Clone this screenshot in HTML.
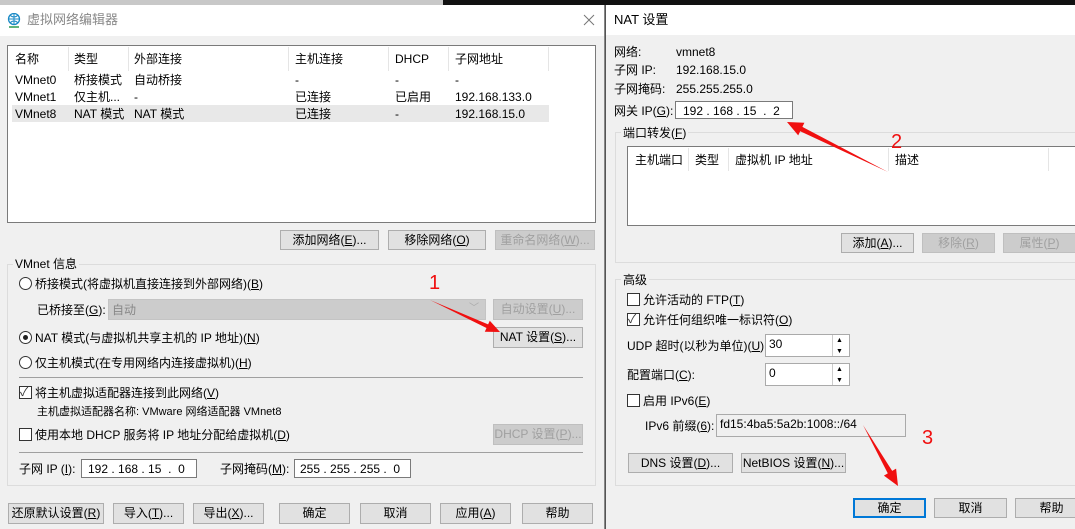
<!DOCTYPE html>
<html><head><meta charset="utf-8">
<style>
*{margin:0;padding:0;box-sizing:border-box}
body{width:1075px;height:529px;overflow:hidden;background:#f0f0f0;font-family:"Liberation Sans","Noto Sans CJK SC",sans-serif;font-size:12px;color:#000;position:relative}
.a{position:absolute;white-space:nowrap;line-height:14px}
.btn{position:absolute;background:#e1e1e1;border:1px solid #adadad;text-align:center;line-height:18px;white-space:nowrap}
.dis{color:#a0a0a0;background:#cccccc;border-color:#bfbfbf}
.box{position:absolute;background:#fff;border:1px solid #7a7a7a}
.grp{position:absolute;border:1px solid #dcdcdc}
.rad{position:absolute;width:13px;height:13px;border:1px solid #333;border-radius:50%;background:#fff}
.chk{position:absolute;width:13px;height:13px;border:1px solid #333;background:#fff}
.sep{position:absolute;height:1px;background:#a0a0a0}
.vs{position:absolute;width:1px;background:#e5e5e5}
.red{position:absolute;color:#f01010;font-size:20px;line-height:20px}
u{text-decoration:underline}
</style></head><body>
<div style="position:absolute;left:0;top:0;width:443px;height:5px;background:#c8c8c8"></div>
<div style="position:absolute;left:443px;top:0;width:632px;height:5px;background:#111"></div>
<div style="position:absolute;left:0;top:5px;width:604px;height:31px;background:#fff"></div>
<svg style="position:absolute;left:7px;top:13px" width="14" height="15" viewBox="0 0 14 15"><circle cx="7" cy="6" r="5.5" fill="none" stroke="#1a8ac6" stroke-width="1.3"/><path d="M1.5 6h11M7 .5v11M3.5 2.5c2 2 5 2 7 0M3.5 9.5c2-2 5-2 7 0" fill="none" stroke="#1a8ac6" stroke-width="1"/><path d="M2 14h10" stroke="#2a9a50" stroke-width="1.5"/></svg>
<div class="a" style="left:27px;top:13px;font-size:13px;color:#888">虚拟网络编辑器</div>
<svg style="position:absolute;left:583px;top:14px" width="12" height="12"><path d="M1 1L11 11M11 1L1 11" stroke="#777" stroke-width="1"/></svg>
<div style="position:absolute;left:604px;top:5px;width:1px;height:524px;background:#888"></div>
<div class="box" style="left:7px;top:45px;width:589px;height:178px"></div>
<div class="vs" style="left:68px;top:47px;height:24px"></div>
<div class="vs" style="left:128px;top:47px;height:24px"></div>
<div class="vs" style="left:288px;top:47px;height:24px"></div>
<div class="vs" style="left:388px;top:47px;height:24px"></div>
<div class="vs" style="left:448px;top:47px;height:24px"></div>
<div class="vs" style="left:548px;top:47px;height:24px"></div>
<div class="a" style="left:15px;top:52px">名称</div><div class="a" style="left:74px;top:52px">类型</div><div class="a" style="left:134px;top:52px">外部连接</div><div class="a" style="left:295px;top:52px">主机连接</div><div class="a" style="left:395px;top:52px">DHCP</div><div class="a" style="left:455px;top:52px">子网地址</div>
<div class="a" style="left:15px;top:73px">VMnet0</div><div class="a" style="left:74px;top:73px">桥接模式</div><div class="a" style="left:134px;top:73px">自动桥接</div><div class="a" style="left:295px;top:73px">-</div><div class="a" style="left:395px;top:73px">-</div><div class="a" style="left:455px;top:73px">-</div>
<div class="a" style="left:15px;top:90px">VMnet1</div><div class="a" style="left:74px;top:90px">仅主机...</div><div class="a" style="left:134px;top:90px">-</div><div class="a" style="left:295px;top:90px">已连接</div><div class="a" style="left:395px;top:90px">已启用</div><div class="a" style="left:455px;top:90px">192.168.133.0</div>
<div style="position:absolute;left:12px;top:105px;width:537px;height:17px;background:#e8e8e8"></div>
<div class="a" style="left:15px;top:107px">VMnet8</div><div class="a" style="left:74px;top:107px">NAT 模式</div><div class="a" style="left:134px;top:107px">NAT 模式</div><div class="a" style="left:295px;top:107px">已连接</div><div class="a" style="left:395px;top:107px">-</div><div class="a" style="left:455px;top:107px">192.168.15.0</div>
<div class="btn" style="left:280px;top:230px;width:99px;height:20px">添加网络(<u>E</u>)...</div>
<div class="btn" style="left:388px;top:230px;width:98px;height:20px">移除网络(<u>O</u>)</div>
<div class="btn dis" style="left:495px;top:230px;width:100px;height:20px">重命名网络(<u>W</u>)...</div>
<div class="grp" style="left:7px;top:264px;width:589px;height:222px"></div>
<div class="a" style="left:13px;top:257px;background:#f0f0f0;padding:0 2px">VMnet 信息</div>
<div class="rad" style="left:19px;top:277px"></div><div class="a" style="left:35px;top:277px">桥接模式(将虚拟机直接连接到外部网络)(<u>B</u>)</div>
<div class="a" style="left:37px;top:303px">已桥接至(<u>G</u>):</div>
<div style="position:absolute;left:108px;top:299px;width:378px;height:21px;background:#cccccc;border:1px solid #c4c4c4"></div>
<div class="a" style="left:112px;top:303px;color:#888">自动</div><div class="a" style="left:469px;top:302px;color:#aaa;font-size:10px">﹀</div>
<div class="btn dis" style="left:493px;top:299px;width:90px;height:21px">自动设置(<u>U</u>)...</div>
<div class="rad" style="left:19px;top:331px"></div><div style="position:absolute;left:23px;top:335px;width:5px;height:5px;border-radius:50%;background:#222"></div>
<div class="a" style="left:35px;top:331px">NAT 模式(与虚拟机共享主机的 IP 地址)(<u>N</u>)</div>
<div class="btn" style="left:493px;top:327px;width:90px;height:21px">NAT 设置(<u>S</u>)...</div>
<div class="rad" style="left:19px;top:356px"></div><div class="a" style="left:35px;top:356px">仅主机模式(在专用网络内连接虚拟机)(<u>H</u>)</div>
<div class="sep" style="left:19px;top:377px;width:564px"></div>
<div class="chk" style="left:19px;top:386px"></div><div class="a" style="left:20px;top:385px;font-size:12px;color:#333">✓</div>
<div class="a" style="left:35px;top:386px">将主机虚拟适配器连接到此网络(<u>V</u>)</div>
<div class="a" style="left:37px;top:405px;font-size:11px">主机虚拟适配器名称: VMware 网络适配器 VMnet8</div>
<div class="chk" style="left:19px;top:428px"></div><div class="a" style="left:35px;top:428px">使用本地 DHCP 服务将 IP 地址分配给虚拟机(<u>D</u>)</div>
<div class="btn dis" style="left:493px;top:424px;width:90px;height:21px">DHCP 设置(<u>P</u>)...</div>
<div class="sep" style="left:19px;top:452px;width:564px"></div>
<div class="a" style="left:19px;top:462px">子网 IP (<u>I</u>):</div>
<div class="box" style="left:81px;top:459px;width:116px;height:19px"></div><div class="a" style="left:88px;top:462px">192 . 168 . 15 &nbsp;. &nbsp;0</div>
<div class="a" style="left:220px;top:462px">子网掩码(<u>M</u>):</div>
<div class="box" style="left:294px;top:459px;width:117px;height:19px"></div><div class="a" style="left:300px;top:462px">255 . 255 . 255 . &nbsp;0</div>
<div class="btn" style="left:8px;top:503px;width:96px;height:21px">还原默认设置(<u>R</u>)</div>
<div class="btn" style="left:113px;top:503px;width:71px;height:21px">导入(<u>T</u>)...</div>
<div class="btn" style="left:193px;top:503px;width:71px;height:21px">导出(<u>X</u>)...</div>
<div class="btn" style="left:279px;top:503px;width:71px;height:21px">确定</div>
<div class="btn" style="left:360px;top:503px;width:71px;height:21px">取消</div>
<div class="btn" style="left:440px;top:503px;width:71px;height:21px">应用(<u>A</u>)</div>
<div class="btn" style="left:522px;top:503px;width:71px;height:21px">帮助</div>

<div style="position:absolute;left:605px;top:5px;width:470px;height:524px;background:#f0f0f0;border-left:1px solid #555"></div>
<div style="position:absolute;left:606px;top:5px;width:469px;height:30px;background:#fff"></div>
<div class="a" style="left:614px;top:13px;font-size:13px">NAT 设置</div>
<div class="a" style="left:614px;top:45px">网络:</div><div class="a" style="left:676px;top:45px">vmnet8</div>
<div class="a" style="left:614px;top:63px">子网 IP:</div><div class="a" style="left:676px;top:63px">192.168.15.0</div>
<div class="a" style="left:614px;top:82px">子网掩码:</div><div class="a" style="left:676px;top:82px">255.255.255.0</div>
<div class="a" style="left:614px;top:104px">网关 IP(<u>G</u>):</div>
<div class="box" style="left:675px;top:101px;width:118px;height:18px"></div><div class="a" style="left:683px;top:104px">192 . 168 . 15 &nbsp;. &nbsp;2</div>
<div class="grp" style="left:615px;top:132px;width:465px;height:131px"></div>
<div class="a" style="left:621px;top:126px;background:#f0f0f0;padding:0 2px">端口转发(<u>F</u>)</div>
<div class="box" style="left:627px;top:146px;width:460px;height:80px"></div>
<div class="vs" style="left:688px;top:148px;height:23px"></div><div class="vs" style="left:728px;top:148px;height:23px"></div><div class="vs" style="left:888px;top:148px;height:23px"></div><div class="vs" style="left:1048px;top:148px;height:23px"></div>
<div class="a" style="left:635px;top:153px">主机端口</div><div class="a" style="left:695px;top:153px">类型</div><div class="a" style="left:735px;top:153px">虚拟机 IP 地址</div><div class="a" style="left:895px;top:153px">描述</div>
<div class="btn" style="left:841px;top:233px;width:73px;height:20px">添加(<u>A</u>)...</div>
<div class="btn dis" style="left:922px;top:233px;width:73px;height:20px">移除(<u>R</u>)</div>
<div class="btn dis" style="left:1003px;top:233px;width:73px;height:20px">属性(<u>P</u>)</div>
<div class="grp" style="left:615px;top:279px;width:465px;height:207px"></div>
<div class="a" style="left:621px;top:273px;background:#f0f0f0;padding:0 2px">高级</div>
<div class="chk" style="left:627px;top:293px"></div><div class="a" style="left:643px;top:293px">允许活动的 FTP(<u>T</u>)</div>
<div class="chk" style="left:627px;top:313px"></div><div class="a" style="left:628px;top:312px;color:#333">✓</div><div class="a" style="left:643px;top:313px">允许任何组织唯一标识符(<u>O</u>)</div>
<div class="a" style="left:627px;top:339px">UDP 超时(以秒为单位)(<u>U</u>):</div>
<div class="box" style="left:765px;top:334px;width:85px;height:23px;border-color:#aaa"></div><div class="a" style="left:769px;top:337px">30</div>
<div style="position:absolute;left:832px;top:335px;width:17px;height:21px;border-left:1px solid #ccc"></div><div class="a" style="left:836px;top:334px;font-size:7px">▲</div><div class="a" style="left:836px;top:345px;font-size:7px">▼</div>
<div class="a" style="left:627px;top:368px">配置端口(<u>C</u>):</div>
<div class="box" style="left:765px;top:363px;width:85px;height:23px;border-color:#aaa"></div><div class="a" style="left:769px;top:366px">0</div>
<div style="position:absolute;left:832px;top:364px;width:17px;height:21px;border-left:1px solid #ccc"></div><div class="a" style="left:836px;top:363px;font-size:7px">▲</div><div class="a" style="left:836px;top:374px;font-size:7px">▼</div>
<div class="chk" style="left:627px;top:394px"></div><div class="a" style="left:643px;top:394px">启用 IPv6(<u>E</u>)</div>
<div class="a" style="left:645px;top:419px">IPv6 前缀(<u>6</u>):</div>
<div style="position:absolute;left:716px;top:414px;width:190px;height:23px;border:1px solid #aaa;background:#f0f0f0"></div><div class="a" style="left:720px;top:417px">fd15:4ba5:5a2b:1008::/64</div>
<div class="btn" style="left:628px;top:453px;width:105px;height:20px">DNS 设置(<u>D</u>)...</div>
<div class="btn" style="left:741px;top:453px;width:105px;height:20px">NetBIOS 设置(<u>N</u>)...</div>
<div class="btn" style="left:853px;top:498px;width:73px;height:20px;border:2px solid #0078d7;line-height:16px">确定</div>
<div class="btn" style="left:934px;top:498px;width:73px;height:20px">取消</div>
<div class="btn" style="left:1015px;top:498px;width:73px;height:20px">帮助</div>

<div class="red" style="left:429px;top:273px">1</div>
<div class="red" style="left:891px;top:132px">2</div>
<div class="red" style="left:922px;top:428px">3</div>
<svg style="position:absolute;left:0;top:0" width="1075" height="529">
<polygon points="430,300 488.1,324.4 489.8,320.7 500,332 484.8,331.7 486.5,328" fill="#f01010"/>
<polygon points="888,172 802.4,126.9 804.4,122.8 787,122 798.2,135.4 800.2,131.3" fill="#f01010"/>
<polygon points="863,425 892.2,470.9 896.1,468.6 898,486 883.9,475.6 887.8,473.4" fill="#f01010"/>
</svg>
</body></html>
